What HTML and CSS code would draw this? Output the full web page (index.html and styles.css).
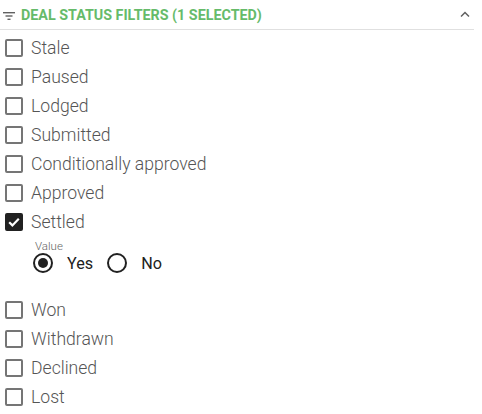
FILE: index.html
```html
<!DOCTYPE html>
<html>
<head>
<meta charset="utf-8">
<link rel="stylesheet" href="styles.css">
</head>
<body>
<div class="panel">
  <div class="header">
    <svg class="filter-icon" width="12" height="8" viewBox="0 0 12 8"><rect x="0" y="0" width="12" height="1.4" fill="#616161"/><rect x="2.5" y="3.3" width="7" height="1.4" fill="#616161"/><rect x="4.5" y="6.6" width="3" height="1.4" fill="#616161"/></svg>
    <span class="title">DEAL STATUS FILTERS (1 SELECTED)</span>
    <svg class="chev" width="10" height="6" viewBox="0 0 10 6"><path d="M1 5.5 L5 1.5 L9 5.5" fill="none" stroke="#616161" stroke-width="1.5"/></svg>
  </div>
  <div class="list">
    <div class="row"><span class="box"></span><span class="label">Stale</span></div>
    <div class="row"><span class="box"></span><span class="label">Paused</span></div>
    <div class="row"><span class="box"></span><span class="label">Lodged</span></div>
    <div class="row"><span class="box"></span><span class="label">Submitted</span></div>
    <div class="row"><span class="box"></span><span class="label">Conditionally approved</span></div>
    <div class="row"><span class="box"></span><span class="label">Approved</span></div>
    <div class="row"><span class="box checked"><svg width="14" height="14" viewBox="0 0 14 14"><path d="M2.2 7.2 L5.4 10.4 L11.8 3.8" fill="none" stroke="#fff" stroke-width="2.2"/></svg></span><span class="label">Settled</span></div>
    <div class="sub">
      <div class="sub-label">Value</div>
      <div class="radios">
        <span class="radio on"><span class="dot"></span></span><span class="rlabel">Yes</span>
        <span class="radio"></span><span class="rlabel">No</span>
      </div>
    </div>
    <div class="row"><span class="box"></span><span class="label">Won</span></div>
    <div class="row"><span class="box"></span><span class="label">Withdrawn</span></div>
    <div class="row"><span class="box"></span><span class="label">Declined</span></div>
    <div class="row"><span class="box"></span><span class="label">Lost</span></div>
  </div>
</div>
</body>
</html>
```
FILE: styles.css
```css
html, body { margin: 0; padding: 0; background: #fff; }
body { font-family: Roboto, "Liberation Sans", sans-serif; }
.panel { width: 474px; }
.header {
  border-bottom: 1px solid #e0e0e0;
  display: flex;
  align-items: center;
  padding-left: 3px;
  padding-right: 4px;
  box-sizing: border-box;
  height: 30px;
}
.filter-icon { margin-right: 6px; margin-top: 2px; }
.title {
  flex: 1;
  color: #66bb6a;
  font-weight: 700;
  font-size: 14.3px;
  letter-spacing: 0;
}
.chev { margin-top: -2px; }
.list { padding-top: 3px; }
.row {
  height: 29px;
  display: flex;
  align-items: center;
  padding-left: 5px;
}
.box {
  width: 18px;
  height: 18px;
  box-sizing: border-box;
  border: 2px solid #757575;
  border-radius: 2px;
  margin-right: 8px;
  display: flex;
  align-items: center;
  justify-content: center;
}
.box.checked { background: #212121; border-color: #212121; }
.label { font-size: 17.6px; color: #555; font-weight: 300; margin-top: 1px; }
.sub { height: 59px; padding-left: 33px; box-sizing: border-box; padding-top: 4px; }
.sub-label { font-size: 11.5px; color: #666; margin-left: 2px; line-height: 13px; font-weight: 300; }
.radios { display: flex; align-items: center; height: 24px; margin-top: -2px; }
.radio {
  width: 20px; height: 20px; box-sizing: border-box;
  border: 2px solid #212121; border-radius: 50%;
  display: flex; align-items: center; justify-content: center;
}
.dot { width: 10px; height: 10px; border-radius: 50%; background: #212121; }
.rlabel { font-size: 16.2px; color: #212121; margin-left: 14px; margin-right: 14px; }
```
